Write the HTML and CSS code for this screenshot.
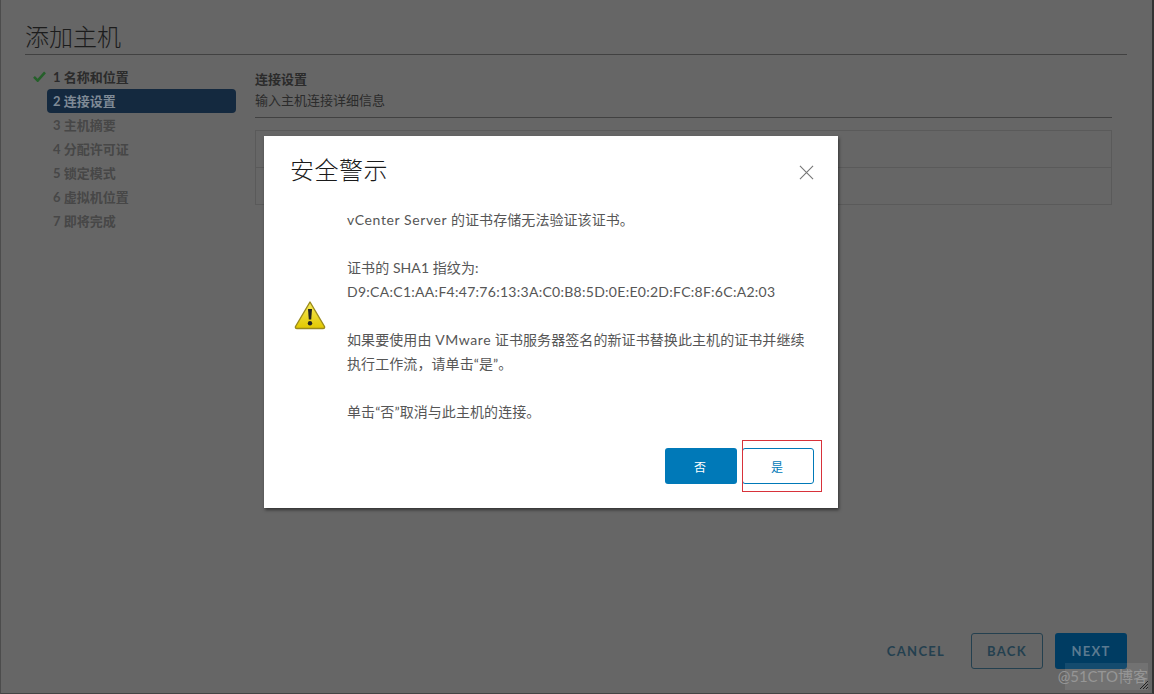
FILE: index.html
```html
<!DOCTYPE html>
<html lang="zh-CN">
<head>
<meta charset="utf-8">
<title>添加主机</title>
<link rel="stylesheet" href="styles.css">
</head>
<body>
<div class="wizard">
  <h1 class="wizard-title">添加主机</h1>
  <div class="wizard-main">
    <nav class="steps">
      <div class="step done"><svg class="check" viewBox="0 0 14 12" width="13" height="11"><path d="M1 6.5 L5 10.5 L13 1.5" fill="none" stroke="#25602a" stroke-width="2.8"/></svg><span>1 名称和位置</span></div>
      <div class="step active"><span>2 连接设置</span></div>
      <div class="step"><span>3 主机摘要</span></div>
      <div class="step"><span>4 分配许可证</span></div>
      <div class="step"><span>5 锁定模式</span></div>
      <div class="step"><span>6 虚拟机位置</span></div>
      <div class="step"><span>7 即将完成</span></div>
    </nav>
    <section class="content">
      <div class="content-head">
        <div class="content-title">连接设置</div>
        <div class="content-sub">输入主机连接详细信息</div>
      </div>
      <div class="info-table">
        <div class="info-row"></div>
        <div class="info-row"></div>
      </div>
    </section>
  </div>
  <footer class="wizard-foot">
    <button class="btn-flat">CANCEL</button>
    <button class="btn-outline">BACK</button>
    <button class="btn-solid">NEXT</button>
  </footer>
</div>

<div class="watermark">@51CTO博客</div>
<svg class="grip" viewBox="0 0 10 10" width="10" height="10"><path d="M1 9 L9 1 M4 9 L9 4 M7 9 L9 7" stroke="#222" stroke-width="1"/></svg>

<div class="modal">
  <header class="modal-head">
    <h2 class="modal-title">安全警示</h2>
    <svg class="close" viewBox="0 0 16 16" width="15" height="15"><path d="M1 1 L15 15 M15 1 L1 15" stroke="#777" stroke-width="1.2" fill="none"/></svg>
  </header>
  <div class="modal-body">
    <div class="warn-col">
      <svg class="warn" viewBox="0 0 32 30" width="32" height="30">
        <defs>
          <linearGradient id="warnFill" x1="0" y1="0" x2="0" y2="1">
            <stop offset="0" stop-color="#f6ea5a"/>
            <stop offset="1" stop-color="#e2c800"/>
          </linearGradient>
        </defs>
        <path d="M16 2 L30.5 26.5 Q31 28.5 29 28.5 L3 28.5 Q1 28.5 1.5 26.5 Z" fill="url(#warnFill)" stroke="#9a8a1c" stroke-width="1.4" stroke-linejoin="round"/>
        <path d="M14 9 H18 L17.2 19.5 H14.8 Z" fill="#222"/>
        <circle cx="16" cy="23.3" r="2.2" fill="#222"/>
      </svg>
    </div>
    <div class="message">
      <p class="line"><span class="latin">vCenter Server</span> 的证书存储无法验证该证书。</p>
      <p class="line gap">证书的 SHA1 指纹为:</p>
      <p class="line hash">D9:CA:C1:AA:F4:47:76:13:3A:C0:B8:5D:0E:E0:2D:FC:8F:6C:A2:03</p>
      <p class="line gap">如果要使用由 <span class="latin">VMware</span> 证书服务器签名的新证书替换此主机的证书并继续</p>
      <p class="line">执行工作流，请单击“是”。</p>
      <p class="line gap">单击“否”取消与此主机的连接。</p>
    </div>
  </div>
  <footer class="modal-foot">
    <button class="btn-no">否</button>
    <button class="btn-yes">是</button>
  </footer>
</div>
</body>
</html>
```
FILE: styles.css
```css
* { box-sizing: border-box; }
html, body { margin: 0; height: 100%; }
body {
  width: 1154px;
  height: 694px;
  overflow: hidden;
  position: relative;
  background: #666;
  font-family: "Lato", "Noto Sans CJK SC", sans-serif;
  border-left: 1px solid #4c4c4c;
  border-right: 2px solid #333;
  border-bottom: 1px solid #444;
}
.wizard {
  display: flex;
  flex-direction: column;
  height: 693px;
  padding: 0 25px 24px 24px;
}
.wizard-title {
  margin: 0;
  height: 55px;
  padding-top: 20px;
  font-size: 24px;
  line-height: 34px;
  font-weight: 300;
  color: #1c1c1c;
  border-bottom: 1px solid #414141;
}
.wizard-main { display: flex; flex: 1; padding-top: 10px; }
.steps { width: 230px; flex: none; display: flex; flex-direction: column; padding-left: 22px; }
.step {
  position: relative;
  height: 24px;
  width: 189px;
  padding-left: 6px;
  font-size: 13px;
  font-weight: 700;
  line-height: 24px;
  color: #474747;
  border-radius: 4px;
}
.step.done { color: #2b2b2b; }
.step.active { background: #14293f; color: #7f8a96; }
.check { position: absolute; left: -14px; top: 6px; }
.content { width: 857px; flex: none; display: flex; flex-direction: column; }
.content-head { height: 53px; padding-top: 2px; border-bottom: 1px solid #414141; }
.content-title { font-size: 13px; font-weight: 700; line-height: 24px; height: 23px; color: #2b2b2b; }
.content-sub { font-size: 13px; line-height: 21px; color: #2b2b2b; }
.info-table { margin-top: 12px; height: 75px; border: 1px solid #5a5a5a; display: flex; flex-direction: column; }
.info-row { flex: 1; }
.info-row + .info-row { border-top: 1px solid #5a5a5a; }
.wizard-foot { display: flex; justify-content: flex-end; align-items: center; gap: 12px; height: 36px; }
.wizard-foot button, .modal-foot button {
  font-family: inherit;
  height: 36px;
  width: 72px;
  border-radius: 3px;
  padding: 0;
}
.wizard-foot button { font-size: 13px; font-weight: 700; letter-spacing: 1.3px; }
.wizard-foot .btn-flat { background: none; border: none; color: #24404f; margin-right: 7px; }
.btn-outline { background: none; border: 1px solid #24404f; color: #24404f; }
.btn-solid { background: #003c62; border: none; color: #5b7a90; }
.watermark {
  position: absolute;
  left: 1064px;
  top: 663px;
  width: 83px;
  height: 27px;
  display: flex;
  justify-content: flex-end;
  background: rgba(255,255,255,0.08);
  color: #969696;
  font-size: 15px;
  line-height: 27px;
  white-space: nowrap;
}
.grip { position: absolute; left: 1138px; top: 680px; }
.modal {
  position: absolute;
  left: 263px;
  top: 136px;
  width: 574px;
  height: 372px;
  background: #fff;
  box-shadow: 1px 2px 3px rgba(0,0,0,0.5);
  display: flex;
  flex-direction: column;
}
.modal-head { display: flex; align-items: center; justify-content: space-between; height: 72px; padding: 0 24px 0 26px; }
.modal-title { margin: 0 0 4px; font-size: 24px; letter-spacing: 0.5px; font-weight: 300; color: #1a1a1a; line-height: 68px; }
.modal-body { display: flex; height: 216px; }
.warn-col { width: 83px; flex: none; display: flex; align-items: center; padding: 0 0 3px 30px; }
.message { color: #565656; font-size: 14px; letter-spacing: 0.08px; }
.latin { letter-spacing: 0.6px; }
.hash { letter-spacing: 0.28px; }
.line { margin: 0; height: 24px; line-height: 24px; white-space: nowrap; }
.gap { margin-top: 24px; }
.modal-foot { position: relative; display: flex; justify-content: flex-end; gap: 5px; padding: 24px 24px 0 0; }
.modal-foot button { font-size: 12px; padding-right: 2px; }
.btn-no { background: #0079b8; color: #fff; border: none; }
.btn-yes { position: relative; background: #fff; color: #0079b8; border: 1px solid #0079b8; }
.btn-yes::after {
  content: "";
  box-sizing: border-box;
  position: absolute;
  left: -1px;
  top: -9px;
  width: 80px;
  height: 52px;
  border: 1px solid #d8323a;
}
```
